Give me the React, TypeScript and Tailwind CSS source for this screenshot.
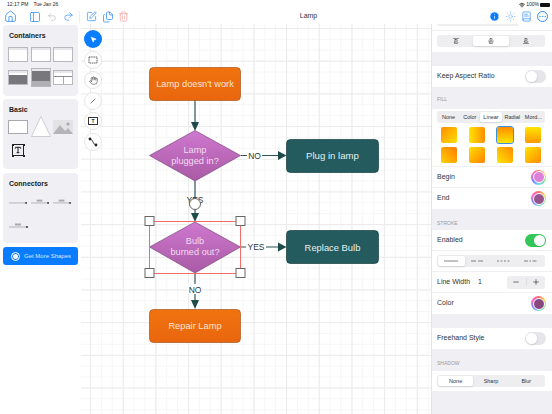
import { Home, PanelLeft, Undo2, Redo2, SquarePen, Files, Trash2, Info, Sun, BookText, Ellipsis, MousePointer2, Hand, Minus, Plus, Wifi, AlignVerticalJustifyStart, AlignVerticalJustifyCenter, AlignVerticalJustifyEnd, Type } from 'lucide-react';

const font = "[font-family:'Liberation_Sans',Arial,sans-serif]";

function Toggle({ on = false }: { on?: boolean }) {
  return (
    <div className={`w-[21px] h-[13px] rounded-full p-px flex ${on ? 'bg-[#34c759] justify-end' : 'bg-[#e6e6ea] justify-start'}`}>
      <div className="w-[11px] h-[11px] rounded-full bg-white shadow-sm" />
    </div>
  );
}

function Segment({ items, active }: { items: React.ReactNode[]; active: number }) {
  return (
    <div className="flex items-stretch ml-[5px] mr-[7px] h-[12px] rounded-[3px] bg-[#eeeef0] p-px">
      {items.map((item, i) => (
        <div key={i} className={`flex-1 min-w-0 flex items-center justify-center text-[5.5px] text-[#333] rounded-[2px] ${i === active ? 'bg-white shadow-sm' : ''}`}>
          {item}
        </div>
      ))}
    </div>
  );
}

function Row({ label, children, last = false }: { label: string; children?: React.ReactNode; last?: boolean }) {
  return (
    <div className={`h-[21px] flex items-center justify-between pl-[5px] pr-[6px] text-[7px] text-[#333] ${last ? '' : 'border-b border-[#f0f0f3]'}`}>
      <span>{label}</span>
      {children}
    </div>
  );
}

function ColorWell({ color }: { color: string }) {
  return (
    <div className="w-[15px] h-[15px] rounded-full p-[1.5px] bg-[conic-gradient(#ff6b6b,#ffd84d,#6fe36f,#6fd5ff,#8a7bff,#ff6bd0,#ff6b6b)]">
      <div className="w-full h-full rounded-full border border-white" style={{ background: color }} />
    </div>
  );
}

function SectionLabel({ text, className }: { text: string; className: string }) {
  return <div className={`pl-[5px] flex items-end text-[5px] text-[#9a9aa0] ${className}`}>{text}</div>;
}

function Card({ title, className, children }: { title: string; className: string; children: React.ReactNode }) {
  return (
    <div className={`mx-[3px] rounded-[4px] bg-[#efeff4] pt-[6px] ${className}`}>
      <div className="pl-[6px] text-[7px] font-bold text-[#222] leading-[10px]">{title}</div>
      {children}
    </div>
  );
}

function Window({ dark = 0, tall = false }: { dark?: number; tall?: boolean }) {
  return (
    <div className={`w-[20px] ${tall ? 'h-[19px]' : 'h-[15px]'} border-[0.5px] border-[#b8b8be] bg-white flex flex-col`}>
      <div className="h-[2px] bg-[#e8e8ec]" />
      {dark === 1 && <div className="flex-1 mt-[2px] bg-[#77777c]" />}
      {dark === 2 && (
        <>
          <div className="flex-[2] bg-[#77777c]" />
          <div className="flex-1 bg-[#b0b0b4]" />
        </>
      )}
      {dark === 3 && (
        <div className="flex-1 flex mt-[3px] border-t-[0.5px] border-[#8b8b90]">
          <div className="flex-1 border-r-[0.5px] border-[#a8a8ae]" />
          <div className="flex-1" />
        </div>
      )}
    </div>
  );
}

function Connector({ label = false, w = 18 }: { label?: boolean; w?: number }) {
  return (
    <svg width={w + 2} height="8" viewBox={`0 0 ${w + 2} 8`}>
      <line x1="0" y1="5" x2={w} y2="5" stroke="#777" strokeWidth="0.5" />
      <circle cx={w} cy="5" r="0.9" fill="#222" />
      {label && <rect x={w / 2 - 3} y="1.5" width="6" height="2" fill="#aaa" />}
    </svg>
  );
}

function ToolButton({ children, active = false }: { children: React.ReactNode; active?: boolean }) {
  return (
    <div className={`w-[18px] h-[18px] rounded-full flex items-center justify-center ${active ? 'bg-[#0a7cff] text-white' : 'bg-white border border-[#e6e6e6] text-[#333]'}`}>
      {children}
    </div>
  );
}

function Handle({ x, y }: { x: number; y: number }) {
  return <rect x={x - 4.5} y={y - 4.5} width="9" height="9" fill="#fff" stroke="#666" strokeWidth="1" />;
}

function Flowchart() {
  return (
    <svg className="absolute left-0 top-0" width="350" height="390" viewBox="81 24 350 390" fontFamily="'Liberation Sans', Arial, sans-serif">
      <defs>
        <linearGradient id="diamond" x1="0" y1="0" x2="0" y2="1">
          <stop offset="0" stopColor="#cf78cf" />
          <stop offset="1" stopColor="#a95aa5" />
        </linearGradient>
        <linearGradient id="orange" x1="0" y1="0" x2="0" y2="1">
          <stop offset="0" stopColor="#f0730f" />
          <stop offset="1" stopColor="#ea660e" />
        </linearGradient>
      </defs>
      <g stroke="#2d5557" strokeWidth="1.2" fill="none">
        <line x1="195" y1="100" x2="195" y2="125" />
        <line x1="195" y1="181" x2="195" y2="216" />
        <line x1="241" y1="155.5" x2="280" y2="155.5" />
        <line x1="241" y1="247" x2="280" y2="247" />
        <line x1="195" y1="273" x2="195" y2="304" />
      </g>
      {/* arrow heads */}
      <path d="M191 122L199 122L195 131Z" fill="#1f4a4a" />
      <path d="M191 213L199 213L195 222Z" fill="#1f4a4a" />
      <path d="M191 300L199 300L195 309Z" fill="#1f4a4a" />
      <path d="M278 151L278 160L286.5 155.5Z" fill="#1f4a4a" />
      <path d="M278 242.5L278 251.5L286.5 247Z" fill="#1f4a4a" />

      <rect x="149.5" y="67.5" width="91" height="33" rx="4" fill="url(#orange)" stroke="#a8551c" strokeWidth="0.7" />
      <text x="195" y="87" textAnchor="middle" fontSize="9.3" fill="#fbe6d6">Lamp doesn't work</text>

      <path d="M149.5 155.5L195 130.5L240.5 155.5L195 181Z" fill="url(#diamond)" stroke="#7d4a80" strokeWidth="0.7" />
      <text x="195" y="153" textAnchor="middle" fontSize="9.2" fill="#f3dcf3">Lamp</text>
      <text x="195" y="164" textAnchor="middle" fontSize="9.2" fill="#f3dcf3">plugged in?</text>

      <rect x="286.5" y="139.5" width="92" height="33" rx="4" fill="#235b5f" stroke="#173c3e" strokeWidth="0.7" />
      <text x="332.5" y="159" textAnchor="middle" fontSize="9.6" fill="#e6f0f0">Plug in lamp</text>

      <path d="M149.5 247L195 222L240.5 247L195 273Z" fill="url(#diamond)" stroke="#7d4a80" strokeWidth="0.7" />
      <rect x="149.5" y="221.5" width="91" height="52" fill="none" stroke="#f46c6c" strokeWidth="1" />
      <text x="195" y="244" textAnchor="middle" fontSize="9.2" fill="#f3dcf3">Bulb</text>
      <text x="195" y="255" textAnchor="middle" fontSize="9.2" fill="#f3dcf3">burned out?</text>

      <rect x="286.5" y="230.5" width="92" height="33" rx="4" fill="#235b5f" stroke="#173c3e" strokeWidth="0.7" />
      <text x="332.5" y="250.5" textAnchor="middle" fontSize="9.4" fill="#e6f0f0">Replace Bulb</text>

      <rect x="149.5" y="309.5" width="91" height="33" rx="4" fill="url(#orange)" stroke="#a8551c" strokeWidth="0.7" />
      <text x="195" y="329" textAnchor="middle" fontSize="9.3" fill="#fbe6d6">Repair Lamp</text>

      <rect x="247" y="150" width="15" height="10" fill="#fff" />
      <text x="254.5" y="159" textAnchor="middle" fontSize="8.5" fill="#2d3b3b">NO</text>
      <rect x="246" y="241" width="20" height="10" fill="#fff" />
      <text x="256" y="250" textAnchor="middle" fontSize="8.5" fill="#2d3b3b">YES</text>
      <rect x="188" y="284" width="14" height="10" fill="#fff" />
      <text x="195" y="292.5" textAnchor="middle" fontSize="8.5" fill="#2d3b3b">NO</text>
      <text x="195" y="203" textAnchor="middle" fontSize="8.5" fill="#2d3b3b">YES</text>
      <circle cx="195" cy="204" r="5.5" fill="#fff" stroke="#555" strokeWidth="0.9" />

      <Handle x={149.5} y={221} />
      <Handle x={240.5} y={221} />
      <Handle x={149.5} y={273} />
      <Handle x={240.5} y={273} />
    </svg>
  );
}

const swatches = [
  'bg-[linear-gradient(135deg,#ff8c00,#ffe000)]',
  'bg-[linear-gradient(90deg,#ffe600,#ff8c00)]',
  'bg-[linear-gradient(180deg,#ff8c00,#ffe600)]',
  'bg-[linear-gradient(180deg,#ffe600,#ff9800)]',
  'bg-[linear-gradient(45deg,#ffd000,#ff7a00)]',
  'bg-[linear-gradient(135deg,#ffe000,#ff8000)]',
  'bg-[linear-gradient(45deg,#ffe600,#ff8800)]',
  'bg-[linear-gradient(135deg,#ffe600,#ff8800)]',
];

function Dash({ pattern }: { pattern: string }) {
  return (
    <svg width="14" height="2" viewBox="0 0 14 2">
      <line x1="0" y1="1" x2="14" y2="1" stroke="#666" strokeWidth="0.8" strokeDasharray={pattern} />
    </svg>
  );
}

export default function App() {
  return (
    <div className={`w-[552px] h-[414px] overflow-hidden flex flex-col bg-white ${font}`}>
      {/* top bar */}
      <header className="h-[24px] shrink-0 flex flex-col">
        <div className="h-[9px] pl-[7px] pr-[2px] flex items-center justify-between text-[5px] text-[#222]">
          <span className="flex gap-[5px] pt-[1px]"><span>12:17 PM</span><span>Tue Jan 26</span></span>
          <span className="flex items-center gap-[1px] pt-[1px]">
            <Wifi size={6} strokeWidth={3} />
            <span>100%</span>
            <span className="w-[10px] h-[4px] rounded-[1px] bg-[#111]" />
          </span>
        </div>
        <div className="flex-1 flex items-center text-[#2f8df5]">
          <div className="flex items-center w-[80px] border-r border-[#eee] h-[12px] pl-[4px]">
            <Home size={13} strokeWidth={1.5} />
            <PanelLeft size={12} strokeWidth={1.5} className="ml-[12px]" />
            <Undo2 size={10} strokeWidth={1.5} className="ml-[6px] text-[#b9b9bd]" />
            <Redo2 size={11} strokeWidth={1.5} className="ml-[6px]" />
          </div>
          <SquarePen size={11} strokeWidth={1.5} className="ml-[6px]" />
          <Files size={12} strokeWidth={1.5} className="ml-[5px]" />
          <Trash2 size={11} strokeWidth={1.5} className="ml-[4px] text-[#f59a9a]" />
          <div className="w-[185px] text-center text-[7px] text-[#333] ml-[87px]">Lamp</div>
          <div className="ml-auto flex items-center gap-[5px] pr-[4px]">
            <Info size={11} className="text-white fill-[#0a7cff]" strokeWidth={1.5} />
            <Sun size={11} strokeWidth={1.2} className="text-[#6aaef5]" />
            <BookText size={11} strokeWidth={1.5} />
            <Ellipsis size={11} strokeWidth={1.5} className="rounded-full border border-[#2f8df5]" />
          </div>
        </div>
      </header>

      <div className="flex-1 flex min-h-0">
        {/* shape library */}
        <aside className="w-[81px] shrink-0 bg-white flex flex-col pt-px">
          <Card title="Containers" className="h-[71px]">
            <div className="grid grid-cols-3 gap-x-[2.5px] px-[5px] mt-[6px]">
              <Window />
              <Window />
              <Window />
            </div>
            <div className="grid grid-cols-3 gap-x-[2.5px] px-[5px] mt-[6px] items-center">
              <Window dark={1} />
              <Window dark={2} tall />
              <Window dark={3} />
            </div>
          </Card>
          <Card title="Basic" className="h-[70px] mt-[3px]">
            <div className="grid grid-cols-3 gap-x-[2.5px] px-[5px] items-center mt-px">
              <div className="w-[20px] h-[14px] bg-white border-[0.5px] border-[#a8a8ae]" />
              <svg width="20" height="21" viewBox="0 0 20 21">
                <path d="M10 .5L19.5 20.5H.5Z" fill="#fff" stroke="#a8a8ae" strokeWidth="0.5" />
              </svg>
              <svg width="20" height="14" viewBox="0 0 20 14">
                <rect width="20" height="14" fill="#e3e3e6" />
                <path d="M0 14L7 5L12 11L15 8L20 14Z" fill="#b5b5b8" />
                <circle cx="15" cy="4" r="1.5" fill="#a5a5a8" />
              </svg>
            </div>
            <div className="relative ml-[9px] mt-[7px] w-[12px] h-[12px] border border-[#222] flex items-center justify-center">
              <Type size={8} strokeWidth={3} className="text-[#222]" />
              <span className="absolute -left-[1.5px] -top-[1.5px] w-[2px] h-[2px] bg-[#222]" />
              <span className="absolute -right-[1.5px] -top-[1.5px] w-[2px] h-[2px] bg-[#222]" />
              <span className="absolute -left-[1.5px] -bottom-[1.5px] w-[2px] h-[2px] bg-[#222]" />
              <span className="absolute -right-[1.5px] -bottom-[1.5px] w-[2px] h-[2px] bg-[#222]" />
            </div>
          </Card>
          <Card title="Connectors" className="h-[70px] mt-[4px]">
            <div className="flex gap-[3px] px-[6px] mt-[9px]">
              <Connector />
              <Connector label />
              <Connector label />
            </div>
            <div className="px-[6px] mt-[16px]">
              <Connector label />
            </div>
          </Card>
          <div className="mx-[3px] mt-[4px] h-[18px] rounded-[3px] bg-[#0a7cff] flex items-center pl-[8px] text-[6px] text-[#d5e8ff]">
            <span className="w-[9px] h-[9px] rounded-full border border-white flex items-center justify-center mr-[4px]">
              <span className="w-[5px] h-[5px] rounded-full bg-white" />
            </span>
            Get More Shapes
          </div>
        </aside>

        {/* canvas */}
        <main className="flex-1 relative overflow-hidden bg-white bg-[linear-gradient(#ebebeb_1px,transparent_1px),linear-gradient(90deg,#ebebeb_1px,transparent_1px),linear-gradient(#f6f6f6_1px,transparent_1px),linear-gradient(90deg,#f6f6f6_1px,transparent_1px)] bg-[size:32.7px_32.7px,32.7px_32.7px,10.9px_10.9px,10.9px_10.9px] bg-[position:9px_4px,9px_4px,9px_4px,9px_4px]">
          <Flowchart />
          <div className="absolute left-[3px] top-[6px] flex flex-col gap-[2.5px]">
            <ToolButton active><MousePointer2 size={7} fill="currentColor" /></ToolButton>
            <ToolButton>
              <svg width="10" height="8" viewBox="0 0 10 8">
                <rect x="1" y="1" width="8" height="6" fill="none" stroke="#333" strokeWidth="0.8" strokeDasharray="1.5 0.7" />
              </svg>
            </ToolButton>
            <ToolButton><Hand size={9} strokeWidth={1.5} /></ToolButton>
            <ToolButton><Minus size={10} strokeWidth={1.5} className="-rotate-45" /></ToolButton>
            <ToolButton>
              <span className="w-[10px] h-[8px] border border-[#333] flex items-center justify-center text-[5px] leading-none font-bold">T</span>
            </ToolButton>
            <ToolButton>
              <svg width="10" height="10" viewBox="0 0 10 10">
                <path d="M2 2C5 2 5 8 8 8" fill="none" stroke="#333" strokeWidth="0.9" />
                <circle cx="2" cy="2" r="1.4" fill="#222" />
                <circle cx="8" cy="8" r="1.4" fill="#222" />
              </svg>
            </ToolButton>
          </div>
        </main>

        {/* inspector */}
        <aside className="w-[121px] shrink-0 bg-[#efeff4] border-l border-[#e4e4e8] flex flex-col">
          <div className="bg-white h-[28px] flex flex-col">
            <div className="h-[2px] ml-[5px] mr-[7px] flex rounded-b-[2px] bg-[#eeeef0]">
              <div className="flex-1" /><div className="flex-1" /><div className="flex-1" />
              <div className="flex-1 bg-white" />
            </div>
            <div className="h-[5px] border-b border-[#eeeef0]" />
            <div className="mt-[4px]">
              <Segment
                active={1}
                items={[
                  <AlignVerticalJustifyStart size={6} />,
                  <AlignVerticalJustifyCenter size={6} />,
                  <AlignVerticalJustifyEnd size={6} />,
                ]}
              />
            </div>
          </div>
          <div className="h-[14px]" />
          <div className="bg-white">
            <Row label="Keep Aspect Ratio" last><Toggle /></Row>
          </div>
          <SectionLabel text="FILL" className="h-[16px]" />
          <div className="bg-white mt-[6px] pt-[2px]">
            <Segment active={2} items={['None', 'Color', 'Linear', 'Radial', 'Mord...']} />
            <div className="mt-[4px] pb-[3px] border-b border-[#f0f0f3]">
              <div className="grid grid-cols-[repeat(4,16px)] gap-x-[12px] gap-y-[4px] ml-[9px]">
                {swatches.map((s, i) => (
                  <div key={i} className={`w-[16px] h-[16px] rounded-[2px] ${s} ${i === 2 ? 'outline outline-1 outline-[#3c8fdc]' : ''}`} />
                ))}
              </div>
            </div>
            <Row label="Begin"><ColorWell color="#dd80da" /></Row>
            <Row label="End" last><ColorWell color="#96558f" /></Row>
          </div>
          <SectionLabel text="STROKE" className="h-[18px]" />
          <div className="bg-white mt-[3px]">
            <Row label="Enabled"><Toggle on /></Row>
            <div className="h-[21px] flex items-center border-b border-[#f0f0f3]">
              <div className="w-full">
                <Segment
                  active={0}
                  items={[<Dash pattern="14 0" />, <Dash pattern="5 2" />, <Dash pattern="2 1.5" />, <Dash pattern="4 1.5 1.5 1.5" />]}
                />
              </div>
            </div>
            <div className="h-[21px] flex items-center pl-[5px] pr-[7px] text-[7px] text-[#333] border-b border-[#f0f0f3]">
              <span>Line Width</span>
              <span className="ml-[8px]">1</span>
              <div className="ml-auto w-[38px] h-[13px] rounded-[3px] bg-[#eeeef0] flex items-center">
                <div className="flex-1 flex justify-center border-r border-[#ddd]"><Minus size={8} /></div>
                <div className="flex-1 flex justify-center"><Plus size={8} /></div>
              </div>
            </div>
            <Row label="Color" last><ColorWell color="#86487f" /></Row>
          </div>
          <div className="h-[14px]" />
          <div className="bg-white">
            <Row label="Freehand Style" last><Toggle /></Row>
          </div>
          <SectionLabel text="SHADOW" className="h-[18px]" />
          <div className="bg-white mt-[4px] py-[4px]">
            <Segment active={0} items={['None', 'Sharp', 'Blur']} />
          </div>
        </aside>
      </div>
    </div>
  );
}
